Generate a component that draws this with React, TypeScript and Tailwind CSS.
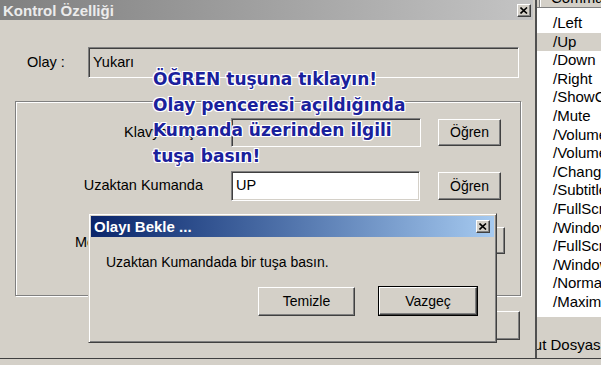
import React from "react";

const raised =
  "border border-t-white border-l-white border-r-[#404040] border-b-[#404040] shadow-[inset_-1px_-1px_0_#808080] bg-[#d4d0c8]";
const sunken =
  "border border-t-[#808080] border-l-[#808080] border-r-white border-b-white shadow-[inset_1px_1px_0_#404040,inset_-1px_-1px_0_#d4d0c8]";

function CloseBtn() {
  return (
    <div className={`w-[14px] h-[13px] flex items-center justify-center ${raised}`}>
      <svg width="8" height="7" viewBox="0 0 8 7">
        <path d="M0.5 0.5 L7 6.5 M7 0.5 L0.5 6.5" stroke="#000" strokeWidth="1.6" />
      </svg>
    </div>
  );
}

function Btn({ label, className = "" }: { label: string; className?: string }) {
  return (
    <div className={`flex items-center justify-center text-[14px] text-black ${raised} ${className}`}>
      {label}
    </div>
  );
}

const items = [
  "/Left",
  "/Up",
  "/Down",
  "/Right",
  "/ShowControls",
  "/Mute",
  "/VolumeUp",
  "/VolumeDown",
  "/ChangeAudio",
  "/Subtitles",
  "/FullScreen",
  "/WindowMode",
  "/FullScreenToggle",
  "/WindowSize",
  "/Normal",
  "/Maximize",
];

export default function App() {
  return (
    <div className="relative w-[601px] h-[365px] overflow-hidden bg-[#d4d0c8] font-['Liberation_Sans',Arial,sans-serif] text-black">
      <div className="flex h-[359px] border-b border-[#404040]">
        {/* Main window */}
        <div className="w-[537px] shrink-0 flex flex-col border-r-2 border-r-[#505050]">
          <div className="h-[20px] w-[533px] flex items-center justify-between pl-[3px] pr-[2px] bg-gradient-to-r from-[#808080] to-[#c4c4c4]">
            <span className="text-[15px] font-bold text-[#ececec] leading-none">Kontrol Özelliği</span>
            <CloseBtn />
          </div>

          <div className="mt-[27px] flex items-center pl-[27px]">
            <span className="w-[61px] text-[14.5px]">Olay :</span>
            <div className={`w-[431px] h-[31px] flex items-center pl-[4px] text-[14.5px] bg-[#d4d0c8] ${sunken}`}>
              Yukarı
            </div>
          </div>

          <div className="mt-[23px] ml-[15px] w-[506px] h-[195px] border border-[#808080] shadow-[inset_1px_1px_0_#fff,1px_1px_0_#fff] pt-[16px] flex flex-col">
            <div className="flex items-center h-[29px]">
              <span className="w-[215px] pr-[28px] text-right text-[14.5px]">Klavye Tuşu</span>
              <div className={`w-[190px] h-[29px] bg-[#d4d0c8] ${sunken}`} />
              <Btn label="Öğren" className="ml-[17px] w-[63px] h-[27px]" />
            </div>
            <div className="flex items-center h-[30px] mt-[24px]">
              <span className="w-[215px] pr-[28px] text-right text-[14.5px]">Uzaktan Kumanda</span>
              <div className={`w-[189px] h-[30px] bg-white flex items-center pl-[4px] text-[14.5px] ${sunken}`}>UP</div>
              <Btn label="Öğren" className="ml-[18px] w-[63px] h-[28px]" />
            </div>
            <div className="flex items-center h-[27px] mt-[26px]">
              <span className="w-[215px] pl-[59px] pt-[4px] text-left text-[14.5px]">Mouse Tuşları</span>
              <div className={`w-[190px] h-[27px] bg-white ${sunken}`} />
              <Btn label="Öğren" className="ml-[17px] w-[67px] h-[27px]" />
            </div>
          </div>

          <div className="mt-[15px] flex justify-end gap-[10px] pr-[15px]">
            <Btn label="Tamam" className="w-[90px] h-[29px]" />
            <Btn label="İptal" className="w-[90px] h-[29px]" />
          </div>
        </div>

        {/* Right list panel */}
        <div className="flex-1 flex flex-col overflow-hidden">
          <div className="h-[8px] overflow-hidden flex border-b border-[#808080]">
            <div className="w-[3px] bg-[#d4d0c8] border-r border-[#808080]" />
            <div className="flex-1 border-l border-white pl-[10px] overflow-hidden">
              <div className="mt-[-11px] text-[15px] leading-[18px] whitespace-nowrap">Command</div>
            </div>
          </div>
          <div className="h-[310px] bg-white pt-[6px] border-b border-[#d4d0c8] overflow-hidden">
            {items.map((it) => (
              <div
                key={it}
                className={`h-[18.6px] flex items-center pl-[16px] text-[15px] whitespace-nowrap ${
                  it === "/Up" ? "bg-[#d4d0c8]" : ""
                }`}
              >
                {it}
              </div>
            ))}
          </div>
          <div className="flex-1 flex items-end pb-[2px] overflow-hidden">
            <span className="ml-[-34px] text-[15px] whitespace-nowrap">Komut Dosyası</span>
          </div>
        </div>
      </div>

      {/* Blue annotation */}
      <div className="absolute left-[153px] top-[67px] font-['DejaVu_Sans',sans-serif] font-bold text-[17px] leading-[25.6px] text-[#1a219c] whitespace-nowrap [text-shadow:1px_1px_0_#fff,-1px_-1px_0_#fff,1px_-1px_0_#fff,-1px_1px_0_#fff,0_1px_0_#fff,0_-1px_0_#fff,1px_0_0_#fff,-1px_0_0_#fff]">
        <div>ÖĞREN tuşuna tıklayın!</div>
        <div>Olay penceresi açıldığında</div>
        <div>Kumanda üzerinden ilgili</div>
        <div>tuşa basın!</div>
      </div>

      {/* Popup */}
      <div className="absolute left-[88px] top-[213px] w-[409px] h-[130px] p-[2px] bg-[#d4d0c8] border border-t-[#d4d0c8] border-l-[#d4d0c8] border-r-[#404040] border-b-[#404040] shadow-[inset_1px_1px_0_#fff,inset_-1px_-1px_0_#808080] flex flex-col">
        <div className="h-[21px] flex items-center justify-between pl-[3px] pr-[4px] bg-gradient-to-r from-[#0a246a] to-[#a6caf0]">
          <span className="text-[15px] font-bold text-white leading-none">Olayı Bekle ...</span>
          <CloseBtn />
        </div>
        <div className="mt-[17px] pl-[15px] text-[14px] leading-[17px]">Uzaktan Kumandada bir tuşa basın.</div>
        <div className="mt-[15px] flex justify-end items-center pr-[16px]">
          <Btn label="Temizle" className="w-[97px] h-[29px] text-[14.5px]" />
          <div className="ml-[23px] border border-black">
            <Btn label="Vazgeç" className="w-[98px] h-[28px] text-[14.5px]" />
          </div>
        </div>
      </div>
    </div>
  );
}
